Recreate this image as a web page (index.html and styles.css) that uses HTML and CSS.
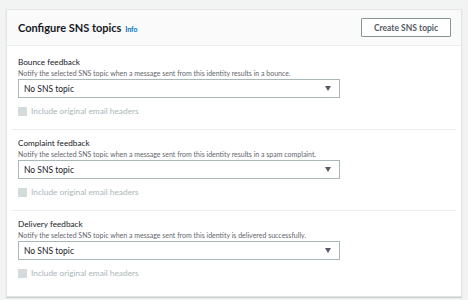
FILE: index.html
```html
<!DOCTYPE html>
<html lang="en">
<head>
    <meta charset="UTF-8">
    <meta name="viewport" content="width=device-width, initial-scale=1.0">
    <title>Configure SNS topics</title>
    <link rel="stylesheet" href="styles.css">
</head>
<body>

<div class="page">
    <div class="panel">
        <div class="panel-header">
            <h2 class="panel-title">Configure SNS topics <a class="info-link" href="#">Info</a></h2>
            <button class="btn">Create SNS topic</button>
        </div>

        <div class="panel-body">
            <div class="field-group">
                <div class="field-label">Bounce feedback</div>
                <div class="field-desc">Notify the selected SNS topic when a message sent from this identity results in a bounce.</div>
                <div class="select">
                    <span>No SNS topic</span>
                    <span class="caret"></span>
                </div>
                <label class="check">
                    <span class="check-box"></span>
                    Include original email headers
                </label>
            </div>

            <div class="field-group">
                <div class="field-label">Complaint feedback</div>
                <div class="field-desc">Notify the selected SNS topic when a message sent from this identity results in a spam complaint.</div>
                <div class="select">
                    <span>No SNS topic</span>
                    <span class="caret"></span>
                </div>
                <label class="check">
                    <span class="check-box"></span>
                    Include original email headers
                </label>
            </div>

            <div class="field-group">
                <div class="field-label">Delivery feedback</div>
                <div class="field-desc">Notify the selected SNS topic when a message sent from this identity is delivered successfully.</div>
                <div class="select">
                    <span>No SNS topic</span>
                    <span class="caret"></span>
                </div>
                <label class="check">
                    <span class="check-box"></span>
                    Include original email headers
                </label>
            </div>
        </div>
    </div>
</div>

</body>
</html>
```

FILE: styles.css
```css
body {
    font-family: Lato, "Open Sans", Arial, sans-serif;
    margin: 0;
    padding: 0;
    background-color: #f2f3f3;
    color: #16191f;
}

.page {
    padding: 9px 6px 5px 6px;
}

.panel {
    background-color: #ffffff;
    border: 1px solid #e4e6e6;
    box-shadow: 0 1px 1px rgba(0, 22, 40, 0.15);
}

.panel-header {
    background-color: #fafafa;
    height: 35px;
    display: flex;
    align-items: center;
    justify-content: space-between;
    padding: 0 10px 0 11px;
    border-bottom: 1px solid #eaeded;
}

.panel-title {
    margin: 0;
    font-size: 11px;
    font-weight: bold;
    color: #16191f;
}

.info-link {
    font-size: 7px;
    font-weight: bold;
    color: #0073bb;
    text-decoration: none;
    margin-left: 1px;
}

.btn {
    font-family: inherit;
    font-size: 8.5px;
    font-weight: bold;
    color: #545b64;
    background-color: #ffffff;
    border: 1px solid #879596;
    border-radius: 1px;
    height: 19px;
    width: 90px;
    padding: 0;
}

.panel-body {
    padding: 3px 5px 0 5px;
}

.field-group {
    padding: 7px 6px 0 6px;
    height: 73px;
    border-bottom: 1px solid #eaeded;
}

.field-group:last-child {
    border-bottom: none;
    height: 78px;
}

.field-label {
    font-size: 8.2px;
    line-height: 12px;
}

.field-desc {
    font-size: 7px;
    line-height: 10px;
    color: #5f666e;
}

.select {
    margin-top: 1px;
    width: 309px;
    height: 17px;
    border: 1px solid #aab7b8;
    display: flex;
    align-items: center;
    justify-content: space-between;
    padding: 0 6px 0 5px;
    font-size: 8.5px;
}

.caret {
    width: 0;
    height: 0;
    border-left: 3.5px solid transparent;
    border-right: 3.5px solid transparent;
    border-top: 5px solid #545b64;
    margin-right: 2px;
}

.check {
    display: flex;
    align-items: center;
    gap: 4px;
    margin-top: 8px;
    font-size: 8.3px;
    color: #aab7b8;
}

.check-box {
    width: 7px;
    height: 7px;
    background-color: #d5dbdb;
    border: 1px solid #d5dbdb;
}
```
